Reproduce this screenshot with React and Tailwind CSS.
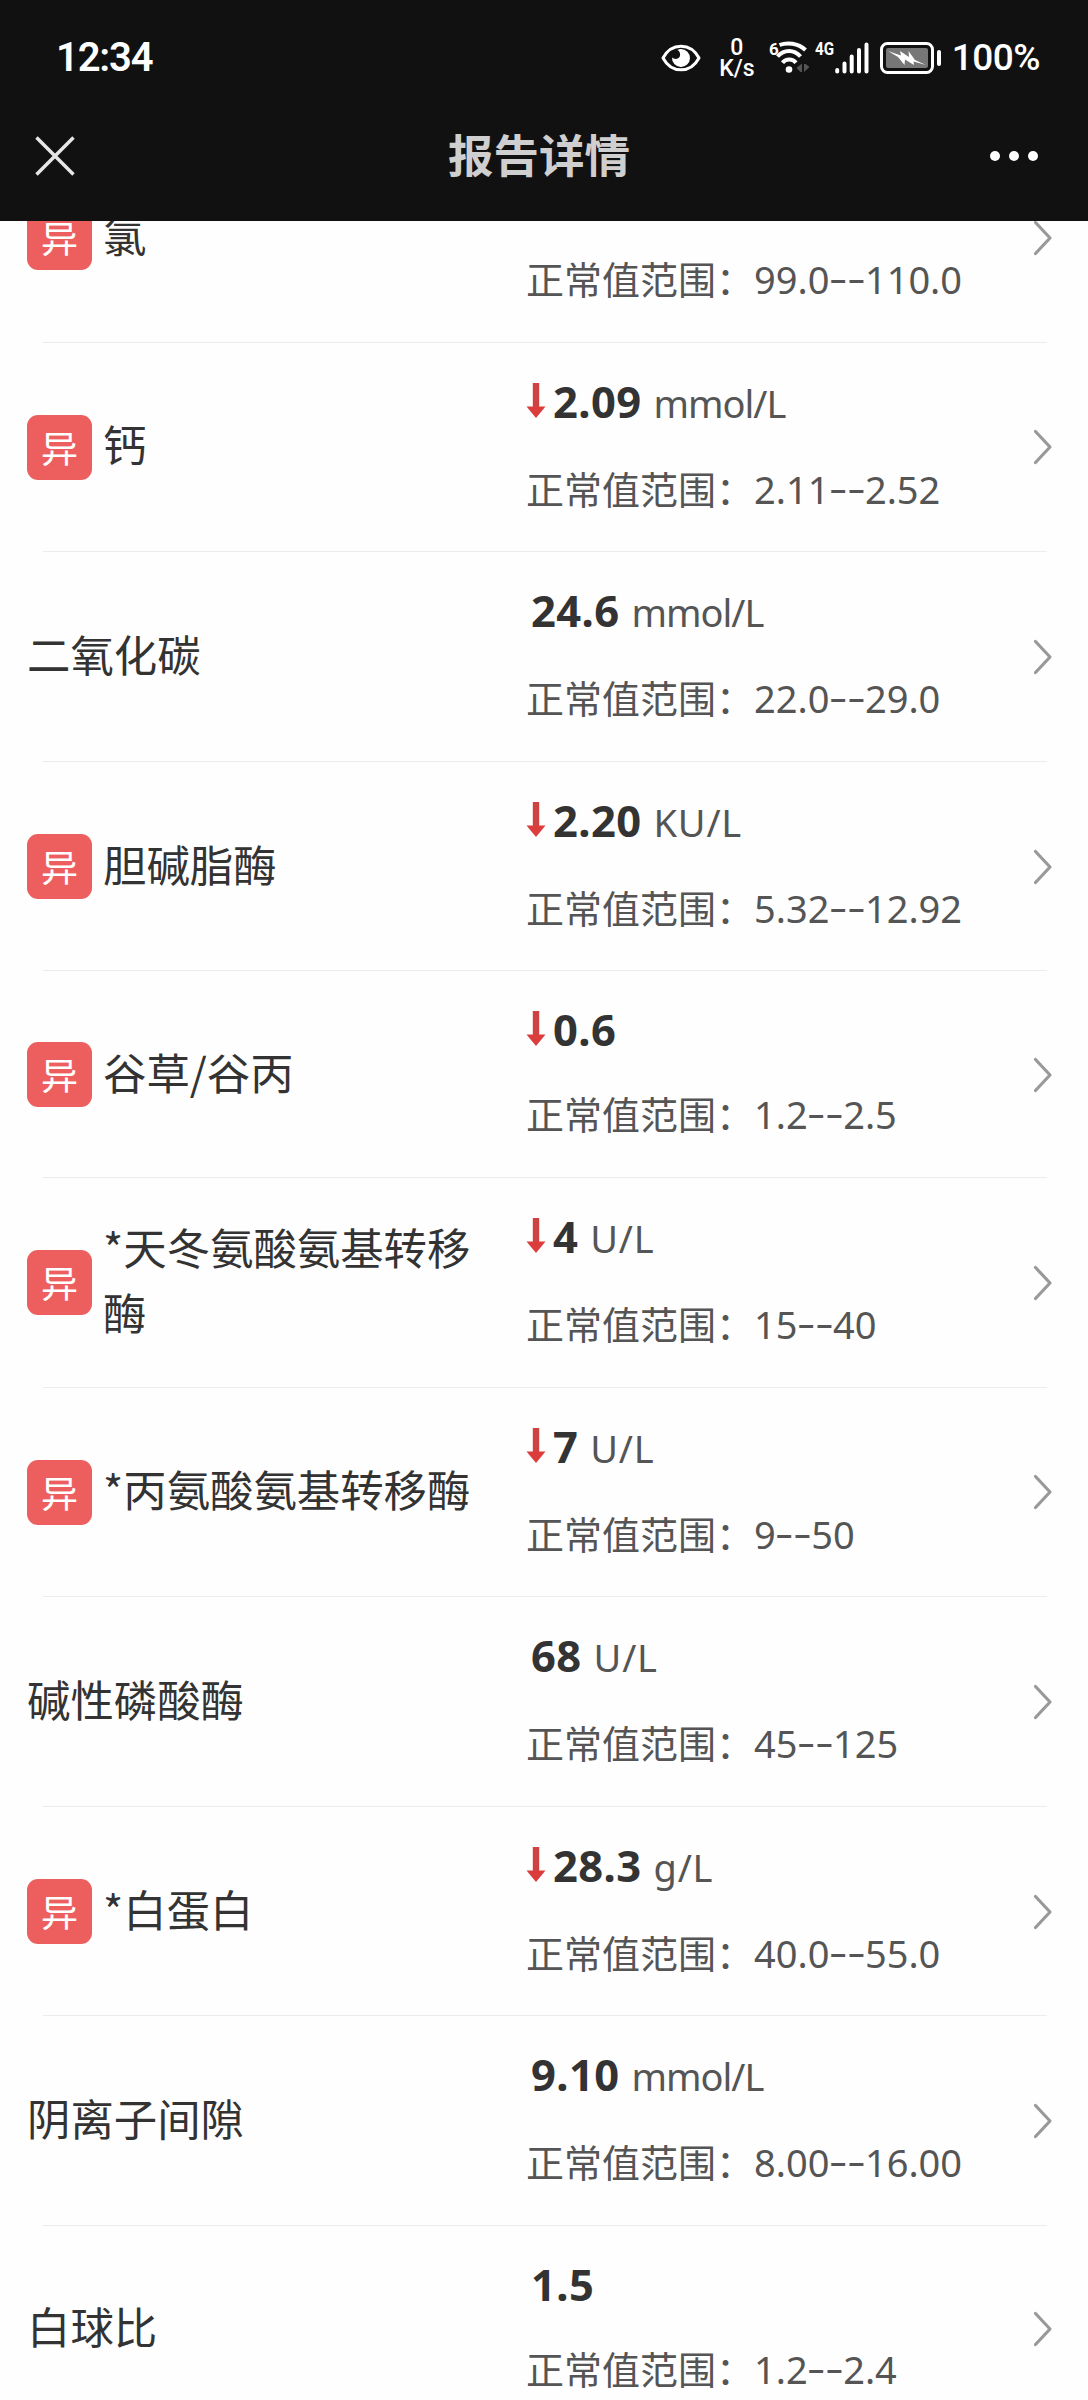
import clsx from "clsx";

const items = [
  { id: 1, name: "氯", range: "99.0--110.0", unit: "mmol/L", abnormal: true },
  { id: 2, name: "钙", value: "2.09", unit: "mmol/L", range: "2.11--2.52", abnormal: true },
  { id: 3, name: "二氧化碳", value: "24.6", unit: "mmol/L", range: "22.0--29.0" },
  { id: 4, name: "胆碱脂酶", value: "2.20", unit: "KU/L", range: "5.32--12.92", abnormal: true },
  { id: 5, name: "谷草/谷丙", value: "0.6", range: "1.2--2.5", abnormal: true },
  { id: 6, name: "*天冬氨酸氨基转移酶", value: "4", unit: "U/L", range: "15--40", abnormal: true },
  { id: 7, name: "*丙氨酸氨基转移酶", value: "7", unit: "U/L", range: "9--50", abnormal: true },
  { id: 8, name: "碱性磷酸酶", value: "68", unit: "U/L", range: "45--125" },
  { id: 9, name: "*白蛋白", value: "28.3", unit: "g/L", range: "40.0--55.0", abnormal: true },
  { id: 10, name: "阴离子间隙", value: "9.10", unit: "mmol/L", range: "8.00--16.00" },
  { id: 11, name: "白球比", value: "1.5", range: "1.2--2.4" },
];

function EyeIcon() {
  return (
    <svg width="40" height="28" viewBox="0 0 40 28" fill="none">
      <path
        d="M2 14C6 6.500 12.500 2.200 20 2.200S34 6.500 38 14C34 21.500 27.500 25.800 20 25.800S6 21.500 2 14Z"
        stroke="#fff"
        strokeWidth="3"
        strokeLinejoin="round"
      />
      <path
        d="M20 5A9 9 0 1 1 11 13.500C13 15.500 17.500 15.500 18.800 12.500C19.800 10 18.500 7 16.500 6C17.500 5.300 18.700 5 20 5Z"
        fill="#fff"
      />
    </svg>
  );
}

function WifiIcon() {
  return (
    <svg width="34" height="33" viewBox="0 0 34 33" fill="none">
      <g stroke="#fff" strokeWidth="4">
        <path d="M3.500 4C11 1 22 2 29.500 9" />
        <path d="M1.500 15.500C8 8 18 8 24.500 15.500" />
        <path d="M6.500 21.800C10 17.500 16.500 17.500 20 21.800" />
      </g>
      <circle cx="13" cy="28.500" r="3.300" fill="#fff" />
      <path d="M26 22.500V31H24.500L20.500 27L26 22.500ZM28 31V23H29.500L33.500 26L28 31Z" fill="#555" />
    </svg>
  );
}

function SignalIcon() {
  return (
    <svg width="34" height="32" viewBox="0 0 34 32" stroke="#fff" strokeWidth="4" strokeLinecap="round">
      <path d="M2.200 28V29.500M9.500 21.500V29.500M16.700 14.500V29.500M24 8V29.500M31.500 2.500V29.500" />
    </svg>
  );
}

function BatteryIcon() {
  return (
    <svg width="62" height="32" viewBox="0 0 62 32" fill="none">
      <rect x="1.500" y="1.500" width="51" height="29" rx="6" stroke="#fff" strokeWidth="3" />
      <rect x="6" y="6" width="42" height="20" rx="2" fill="#777" />
      <path d="M8 9L21 13.500L20 9L29 15L28.500 9L35 18L46 23L33.500 19.500L34 23L25 17.500L24.500 23L18 15Z" fill="#fff" />
      <rect x="57" y="8" width="4" height="16" rx="2" fill="#fff" />
    </svg>
  );
}

function StatusBar() {
  return (
    <div className="flex h-[115px] items-center justify-between pr-[48px] pl-[56px] font-['Roboto','Noto_Sans',sans-serif] text-white">
      <span className="text-[40px] leading-none font-semibold tracking-[-1.2px]">12:34</span>
      <div className="flex h-[40px] items-center">
        <EyeIcon />
        <div className="ml-[18px] flex w-[36px] flex-col items-center text-[23px] leading-[21px] font-medium">
          <span>0</span>
          <span>K/s</span>
        </div>
        <span className="mt-[2px] -mr-[3px] ml-[14px] self-start text-[17px] leading-[18px] font-bold">6</span>
        <WifiIcon />
        <span className="mt-[2px] ml-[5px] w-[20px] origin-left scale-x-80 self-start text-[19px] leading-[18px] font-bold">
          4G
        </span>
        <SignalIcon />
        <span className="ml-[11px] flex">
          <BatteryIcon />
        </span>
        <span className="ml-[10px] text-[37px] leading-none font-medium tracking-[-0.5px]">100%</span>
      </div>
    </div>
  );
}

function NavBar() {
  return (
    <div className="flex h-[106px] items-center justify-between pr-[50px] pb-[24px] pl-[35px]">
      <svg width="40" height="40" viewBox="0 0 40 40" stroke="#e6e6e6" strokeWidth="3.500">
        <path d="M1.500 1.500L38.500 38.500M38.500 1.500L1.500 38.500" />
      </svg>
      <h1 className="-mt-[4px] ml-[13px] text-[45.5px] leading-none font-bold text-[#cfcfcf]">报告详情</h1>
      <div className="flex gap-[9px]">
        <span className="size-[10px] rounded-full bg-white" />
        <span className="size-[10px] rounded-full bg-white" />
        <span className="size-[10px] rounded-full bg-white" />
      </div>
    </div>
  );
}

function DownArrow() {
  return (
    <svg className="mr-[7px] inline-block align-baseline" width="20" height="35" viewBox="0 0 20 35">
      <path d="M6.800 0H13.200V24H6.800Z" fill="#cf4242" />
      <path d="M.5 23.500H19.500L10 35Z" fill="#db3c3c" />
    </svg>
  );
}

function ReportRow({ item }) {
  const { name, value, unit, range, abnormal } = item;
  const [low, high] = range.split("--");

  return (
    <li className={clsx("flex pr-[35px] pl-[27px]", unit ? "h-[209.6px]" : "h-[206.6px]")}>
      <div className="flex w-[499px] items-center pt-[2px]">
        {abnormal && (
          <span className="mr-[11px] flex size-[65px] shrink-0 items-center justify-center rounded-[11px] bg-[#ed5f5f] text-[37px] leading-none text-white">
            异
          </span>
        )}
        <span className="w-[385px] pb-[7px] text-[43.4px] leading-[65px] text-[#333]">{name}</span>
      </div>

      <div className="flex-1 pt-[26px] font-['Noto_Sans','Noto_Sans_CJK_SC',sans-serif] text-[#555]">
        <p className="h-[66px] text-[43.5px] leading-[66px] whitespace-nowrap">
          {value && (
            <>
              {abnormal ? <DownArrow /> : <span className="inline-block w-[5px]" />}
              <span className="font-bold tracking-[0.4px] text-[#333]">{value}</span>
              {unit && (
                <span
                  className={clsx(
                    "ml-[12px] text-[38px]",
                    unit === "mmol/L" ? "tracking-[-1px]" : "tracking-[0.8px]"
                  )}
                >
                  {unit}
                </span>
              )}
            </>
          )}
        </p>
        <p className={clsx("text-[38px] leading-[57px] whitespace-nowrap", unit ? "mt-[27px]" : "mt-[24px]")}>
          正常值范围：{low}
          <span className="mx-[5.5px] inline-block -translate-y-[2px] scale-x-150">--</span>
          {high}
        </p>
      </div>

      <svg className="mt-[2px] self-center" width="20" height="36" viewBox="0 0 20 36" fill="none">
        <path d="M2.500 2.500L17 18L2.500 33.500" stroke="#999" strokeWidth="3.200" strokeLinecap="round" strokeLinejoin="round" />
      </svg>
    </li>
  );
}

export default function App() {
  return (
    <div className="flex h-[2400px] w-[1088px] flex-col overflow-hidden bg-[#fefefe] font-['Noto_Sans_CJK_SC',sans-serif]">
      <header className="z-10 h-[221px] shrink-0 bg-[#111]">
        <StatusBar />
        <NavBar />
      </header>

      {/* list is scrolled part way under the header */}
      <main className="-mt-[89px]">
        <ul>
          {items.map((item, i) => (
            <div key={item.id}>
              {i > 0 && <div className="mr-[41px] -mb-px ml-[43px] h-px bg-[#ebeced]" />}
              <ReportRow item={item} />
            </div>
          ))}
        </ul>
      </main>
    </div>
  );
}
